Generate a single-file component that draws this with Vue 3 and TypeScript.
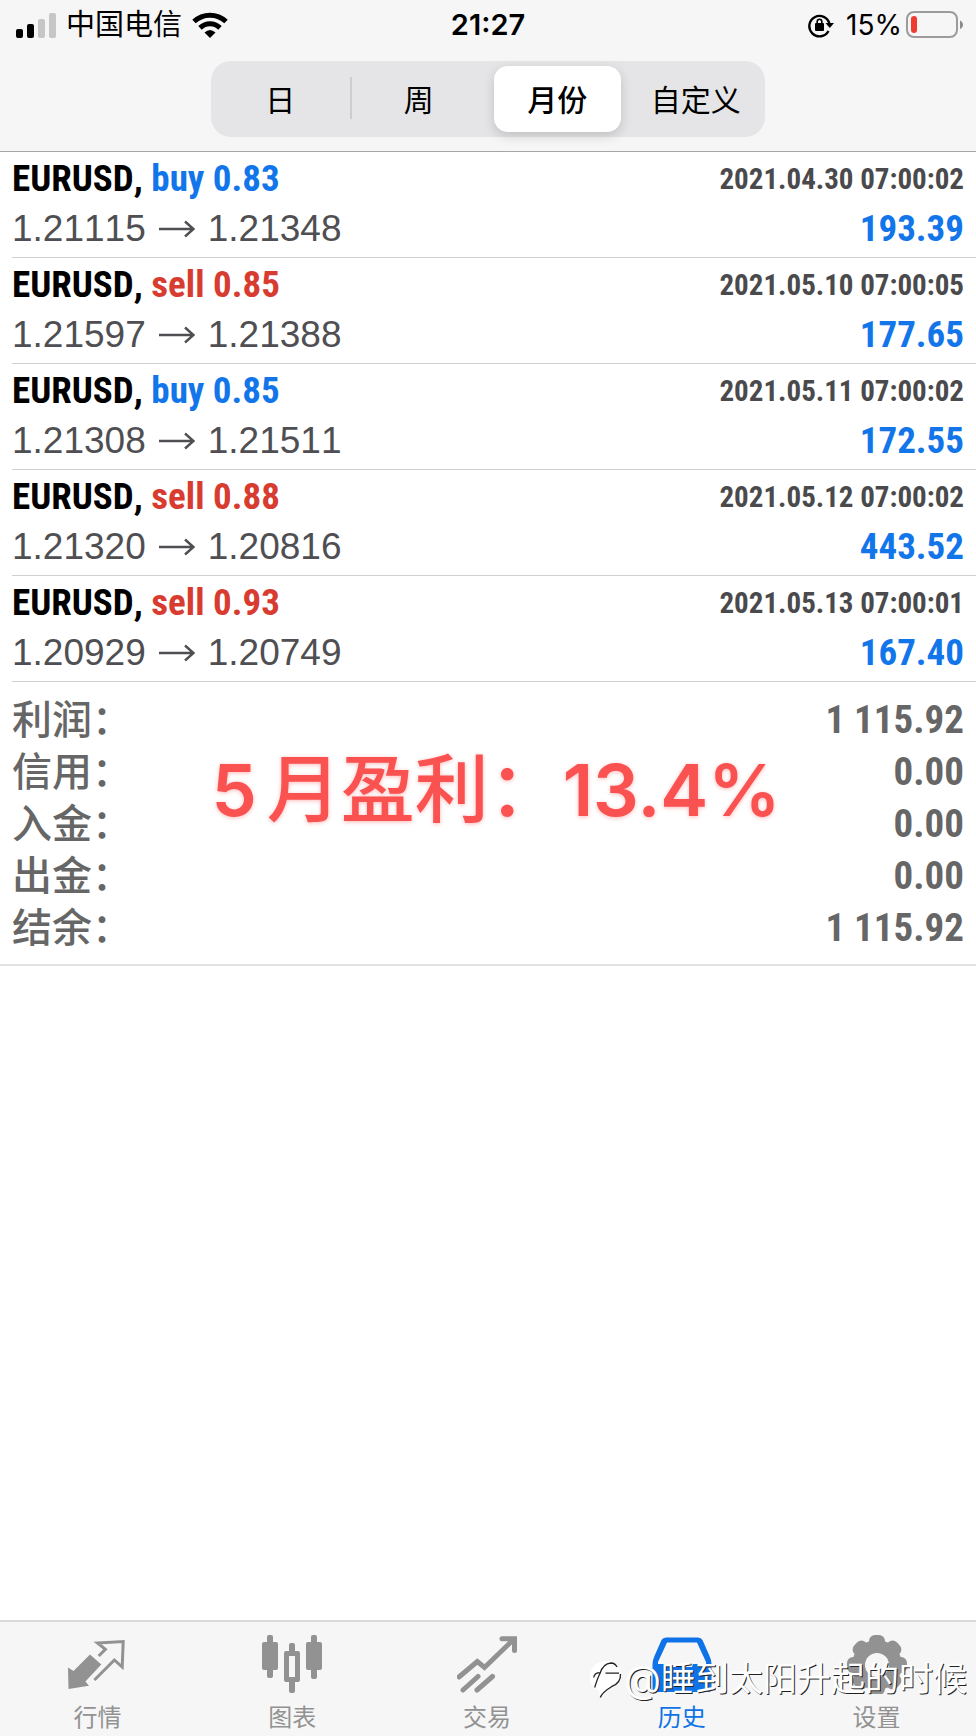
<script setup lang="ts">
import { ref } from 'vue'

interface Trade {
  side: 'buy' | 'sell'
  lots: string
  open: string
  close: string
  time: string
  profit: string
}

const periods: string[] = ['日', '周', '月份', '自定义']
const period = ref<number>(2)
const activeTab = ref<string>('history')

const trades: Trade[] = [
  { side: 'buy', lots: '0.83', open: '1.21115', close: '1.21348', time: '2021.04.30 07:00:02', profit: '193.39' },
  { side: 'sell', lots: '0.85', open: '1.21597', close: '1.21388', time: '2021.05.10 07:00:05', profit: '177.65' },
  { side: 'buy', lots: '0.85', open: '1.21308', close: '1.21511', time: '2021.05.11 07:00:02', profit: '172.55' },
  { side: 'sell', lots: '0.88', open: '1.21320', close: '1.20816', time: '2021.05.12 07:00:02', profit: '443.52' },
  { side: 'sell', lots: '0.93', open: '1.20929', close: '1.20749', time: '2021.05.13 07:00:01', profit: '167.40' },
]

const totals: { label: string; value: string }[] = [
  { label: '利润：', value: '1 115.92' },
  { label: '信用：', value: '0.00' },
  { label: '入金：', value: '0.00' },
  { label: '出金：', value: '0.00' },
  { label: '结余：', value: '1 115.92' },
]

const tabs: { id: string; label: string }[] = [
  { id: 'quotes', label: '行情' },
  { id: 'chart', label: '图表' },
  { id: 'trade', label: '交易' },
  { id: 'history', label: '历史' },
  { id: 'settings', label: '设置' },
]
</script>

<template>
  <div class="screen">
    <header class="top">
      <div class="status">
        <div class="status-left">
          <svg class="signal" viewBox="0 0 40 26" aria-hidden="true">
            <rect x="0" y="17" width="7" height="9" rx="2" />
            <rect x="11" y="12" width="7" height="14" rx="2" />
            <rect class="weak" x="22" y="7" width="7" height="19" rx="2" />
            <rect class="weak" x="33" y="1" width="7" height="25" rx="2" />
          </svg>
          <span class="carrier">中国电信</span>
          <svg class="wifi" viewBox="0 0 36 26" aria-hidden="true">
            <path d="M2 9.5C11 1 25 1 34 9.5" />
            <path d="M8 15.8C13.8 10.4 22.2 10.4 28 15.8" />
            <path class="dot" d="M12.5 20.5Q18 15.5 23.5 20.5L18 26Z" />
          </svg>
        </div>
        <strong class="clock">21:27</strong>
        <div class="status-right">
          <svg class="lock" viewBox="0 0 26 26" aria-hidden="true">
            <path class="ring" d="M20.5 19A10.2 10.2 0 1 1 21.5 12" />
            <path d="M17.5 11H26L21.8 16Z" />
            <rect x="7" y="11" width="9" height="8" rx="1" />
            <path class="shackle" d="M9.2 12V9.5a2.3 2.3 0 0 1 4.6 0V12" />
          </svg>
          <span class="percent">15%</span>
          <svg class="battery" viewBox="0 0 58 28" aria-hidden="true">
            <rect class="case" x="1" y="1" width="50" height="25" rx="7" />
            <rect class="charge" x="5" y="5" width="6" height="17" rx="3" />
            <path class="nub" d="M54 9.5c4 1.5 4 7 0 8.5Z" />
          </svg>
        </div>
      </div>
      <div class="segments">
        <button
          v-for="(name, i) in periods"
          :key="name"
          type="button"
          :class="{ selected: i === period, divided: i > 0 && i !== period && i - 1 !== period }"
          :aria-pressed="i === period"
          @click="period = i"
        >
          {{ name }}
        </button>
      </div>
    </header>

    <main class="content">
      <ul class="trades">
        <li v-for="t in trades" :key="t.time">
          <div class="line">
            <span class="symbol">EURUSD, <span :class="t.side">{{ t.side }} {{ t.lots }}</span></span>
            <time>{{ t.time }}</time>
          </div>
          <div class="line">
            <span class="prices">
              {{ t.open }}
              <svg viewBox="0 0 36 18" role="img" aria-label="to"><path d="M0 9H34M26 1.5L34.5 9L26 16.5" /></svg>
              {{ t.close }}
            </span>
            <span class="profit">{{ t.profit }}</span>
          </div>
        </li>
      </ul>

      <section class="summary">
        <dl>
          <div v-for="row in totals" :key="row.label">
            <dt>{{ row.label }}</dt>
            <dd>{{ row.value }}</dd>
          </div>
        </dl>
        <p class="banner"><span class="month">5</span><span class="caption">月盈利：</span><span>13.4%</span></p>
      </section>
    </main>

    <nav class="tabs">
      <button
        v-for="tab in tabs"
        :key="tab.id"
        type="button"
        :class="{ active: tab.id === activeTab }"
        @click="activeTab = tab.id"
      >
        <svg viewBox="0 0 60 60" aria-hidden="true">
          <template v-if="tab.id === 'quotes'">
            <path class="stroke thin" d="M31.7 22L38.4 15.3L30.5 9L56.2 7.5L55.2 33L47.4 26L27.4 46" />
            <path d="M1 33.5L6.5 37L23 20.5L34.3 30.5L18.4 47.5L22 51.8L1.5 55Z" />
          </template>
          <template v-else-if="tab.id === 'chart'">
            <rect x="0" y="8" width="16" height="28" rx="2" />
            <rect x="5" y="1" width="6" height="43" rx="2" />
            <rect x="27" y="9" width="6" height="50" rx="2" />
            <rect x="22" y="17" width="16" height="31" rx="2" />
            <rect class="hole" x="27" y="22" width="6" height="21" />
            <rect x="44" y="8" width="16" height="28" rx="2" />
            <rect x="49" y="1" width="6" height="44" rx="2" />
          </template>
          <template v-else-if="tab.id === 'trade'">
            <path class="stroke" d="M2 43L20.3 27.5L27.5 33.5L56 6M45 4.8H57.5V16.5M6 56L21 42.500M20 56L35.5 42.5" />
          </template>
          <template v-else-if="tab.id === 'history'">
            <path fill-rule="evenodd" d="M14 3.5H46Q49 3.5 50.5 6L57.5 22Q59.5 26 59.5 30V55Q59.5 58 56.5 58H3.5Q.5 58 .5 55V30Q.5 26 2.5 22L9.5 6Q11 3.5 14 3.5ZM15 8.5L6 28V30H19L20 33H40L41 30H54V28L45 8.5Z" />
          </template>
          <template v-else>
            <circle cx="30" cy="31" r="25" />
            <rect v-for="n in 8" :key="n" x="22" y="1" width="16" height="16" rx="6" :transform="`rotate(${n * 45} 30 31)`" />
            <circle class="hole" cx="30" cy="31" r="12" />
          </template>
        </svg>
        <span>{{ tab.label }}</span>
      </button>
      <div class="watermark">
        <svg viewBox="0 0 36 40" aria-hidden="true">
          <path d="M2 17C3 7 10 2 18 2C28 1 33 8 33 15C33 23 27 27 22 29C18 32 14 35 12 39L11 31C4 29 1 24 2 17Z" />
          <path class="mark" d="M5.7 18.5Q6.5 13.7 12.3 13.7M6.7 28.5C8.5 23 9.5 19 12 14.5C14 8 17 4.5 23 4Q27 4 29 8M17.5 14.2H31M32.5 15C33 22 29 25.5 23.5 27.7C18 31 14 34 12.3 38.5" />
        </svg>
        <span class="at">@</span><span>睡到太阳升起的时候</span>
      </div>
    </nav>
  </div>
</template>

<style>
body {
  margin: 0;
  background: #fff;
}
</style>

<style scoped>
.screen {
  min-height: 100vh;
  display: flex;
  flex-direction: column;
  font-family: Inter, "Noto Sans CJK SC", sans-serif;
  color: #000;
}
button {
  margin: 0;
  padding: 0;
  border: 0;
  background: none;
  color: inherit;
  font-family: inherit;
}
.top {
  background: #f6f6f6;
  border-bottom: 1px solid #a6a6a8;
}
.status {
  height: 50px;
  padding: 0 12px;
  display: grid;
  grid-template-columns: 1fr auto 1fr;
  align-items: center;
  font-size: 28px;
  line-height: 50px;
}
.status-left,
.status-right {
  display: flex;
  align-items: center;
}
.status-left {
  gap: 10px;
  padding-left: 4px;
}
.status-right { justify-content: flex-end; }
.carrier { font-size: 29px; }
.clock {
  font-size: 29px;
  font-weight: 600;
}
.signal { width: 40px; height: 26px; }
.signal .weak { fill: #c6c6c6; }
.wifi {
  width: 36px;
  height: 26px;
  fill: none;
  stroke: #000;
  stroke-width: 5;
}
.wifi .dot { fill: #000; stroke: none; }
.lock { width: 26px; height: 26px; margin-right: 12px; }
.ring { fill: none; stroke: #000; stroke-width: 2.4; }
.shackle { fill: none; stroke: #000; stroke-width: 1.6; }
.percent { margin-right: 4px; }
.battery { width: 58px; height: 28px; }
.case { fill: none; stroke: #9b9b9b; stroke-width: 2; }
.charge { fill: #f03c30; }
.nub { fill: #8b8b8b; }

.segments {
  width: 554px;
  max-width: 94%;
  height: 76px;
  margin: 11px auto 14px;
  display: grid;
  grid-template-columns: repeat(4, 1fr);
  border-radius: 20px;
  background: #e5e5e7;
}
.segments button {
  position: relative;
  padding-bottom: 3px;
  font-size: 30px;
}
.segments .selected {
  margin: 5px 6px;
  border-radius: 14px;
  background: #fff;
  font-weight: 500;
  box-shadow: 0 4px 12px rgba(0, 0, 0, 0.16);
}
.segments .divided::before {
  content: "";
  position: absolute;
  left: 0;
  top: 16px;
  bottom: 18px;
  width: 2px;
  background: #cdcdd0;
}

.content { flex: 1; }
.trades {
  list-style: none;
  margin: 0;
  padding: 0 0 0 12px;
  font-family: "Roboto Condensed", "Liberation Sans", sans-serif;
  font-kerning: none;
}
.trades li {
  padding: 2px 12px 3px 0;
  border-bottom: 1px solid #cfd0d2;
}
.line {
  display: flex;
  justify-content: space-between;
  line-height: 50px;
  white-space: nowrap;
}
.symbol {
  font-size: 37px;
  font-weight: 700;
}
.buy { color: #1276ea; }
.sell { color: #d83c30; }
time {
  color: #4a4a4d;
  font-size: 29px;
  font-weight: 700;
}
.prices {
  display: flex;
  align-items: center;
  gap: 13px;
  color: #4f4f53;
  font-family: "Liberation Sans", sans-serif;
  font-size: 37px;
}
.prices svg {
  width: 36px;
  height: 18px;
  fill: none;
  stroke: #4f4f53;
  stroke-width: 2.4;
}
.profit {
  color: #1276ea;
  font-size: 37px;
  font-weight: 700;
}

.summary {
  position: relative;
  padding: 12px 12px 10px;
  border-bottom: 2px solid #e2e2e4;
  color: #666;
}
dl { margin: 0; }
dl div {
  display: flex;
  justify-content: space-between;
  line-height: 52px;
}
dt {
  font-family: "Liberation Sans", "Noto Sans CJK SC", sans-serif;
  font-size: 40px;
  font-weight: 500;
}
dd {
  margin: 0;
  font-family: "Roboto Condensed", "Liberation Sans", sans-serif;
  font-size: 39px;
  font-weight: 700;
  font-kerning: none;
}
.banner {
  position: absolute;
  top: 62px;
  left: 0;
  right: 0;
  margin: 0;
  padding-left: 16px;
  text-align: center;
  color: #fa5151;
  font-size: 72px;
  font-weight: 600;
  line-height: 90px;
  text-shadow: 0 1px 4px rgba(250, 81, 81, 0.4);
}
.month { margin-right: 10px; }
.caption {
  font-size: 74px;
  font-weight: 500;
}

.tabs {
  position: relative;
  padding-right: 2px;
  display: grid;
  grid-template-columns: repeat(5, 1fr);
  border-top: 2px solid #d9d9d9;
  background: #f6f6f6;
}
.tabs button {
  padding: 12px 0 3px;
  display: flex;
  flex-direction: column;
  align-items: center;
  gap: 9px;
  color: #929292;
  font-size: 24px;
  line-height: 30px;
}
.tabs .active { color: #0f72e6; }
.tabs button svg {
  width: 60px;
  height: 60px;
  fill: currentColor;
}
.tabs .stroke {
  fill: none;
  stroke: currentColor;
  stroke-width: 5;
  stroke-linecap: round;
  stroke-linejoin: miter;
}
.tabs .thin { stroke-width: 3; stroke-linecap: butt; }
.tabs .hole { fill: #f6f6f6; }
.watermark {
  position: absolute;
  right: 9px;
  bottom: 30px;
  display: flex;
  align-items: center;
  color: #fff;
  font-size: 34px;
  line-height: 54px;
  text-shadow: 1px 1px 0 #222;
  pointer-events: none;
}
.at { font-size: 38px; }
.watermark svg {
  width: 36px;
  height: 40px;
  fill: #fff;
}
.watermark .mark {
  fill: none;
  stroke: #222;
  stroke-width: 1.3;
}
</style>
